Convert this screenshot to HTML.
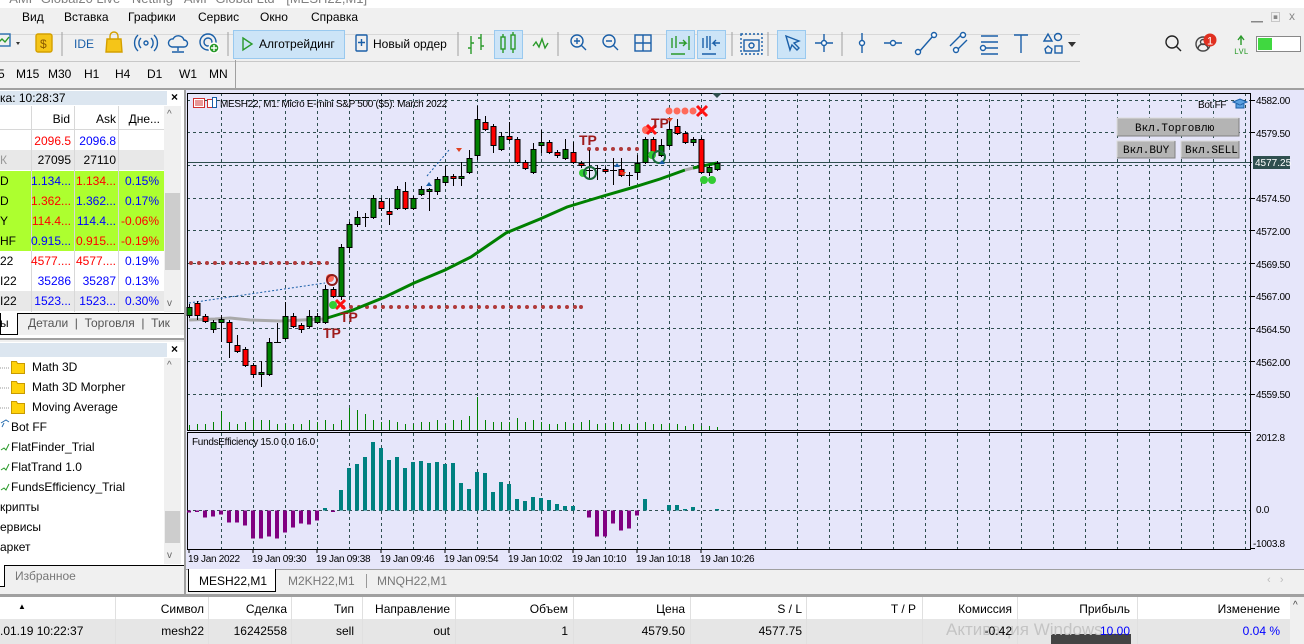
<!DOCTYPE html>
<html><head><meta charset="utf-8">
<style>
*{margin:0;padding:0;box-sizing:border-box}
body{width:1304px;height:644px;overflow:hidden;background:#f0f0f0;font-family:"Liberation Sans","Noto Sans CJK SC",sans-serif;font-size:12px;color:#000;position:relative}
.a{position:absolute;white-space:nowrap}
.sep{position:absolute;width:1px;background:#a0a0a0}
.mw div.r{position:absolute;left:0;width:164px;height:20px}
.t{position:absolute;white-space:nowrap;text-align:right}
</style></head><body>
<!-- title -->
<div class="a" style="left:0;top:0;width:1304px;height:8px;background:#fff;overflow:hidden"><div class="a" style="left:2px;top:-9px;color:#808080;font-size:13px">- AMP Global20 Live - Netting - AMP Global Ltd - [MESH22,M1]</div></div>
<!-- menu -->
<div class="a" style="left:22px;top:10px;font-size:12px">Вид</div>
<div class="a" style="left:64px;top:10px">Вставка</div>
<div class="a" style="left:128px;top:10px">Графики</div>
<div class="a" style="left:198px;top:10px">Сервис</div>
<div class="a" style="left:260px;top:10px">Окно</div>
<div class="a" style="left:311px;top:10px">Справка</div>
<div class="a" style="left:1251px;top:8px;color:#888;font-size:12px">▁</div>
<div class="a" style="left:1270px;top:9px;color:#888;font-size:11px">▣</div>
<div class="a" style="left:1289px;top:9px;color:#888;font-size:12px">x</div>
<div class="a" style="left:0;top:34px;width:1080px;height:1px;background:#d8d8d8"></div>
<div class="a" style="left:0;top:61px;width:1080px;height:1px;background:#c8c8c8"></div>
<!-- toolbar -->
<svg class="a" style="left:0;top:28px" width="1304" height="34">
<g fill="none" stroke-width="1.4">
<rect x="-4" y="6" width="14" height="12" stroke="#2a6fb0"/><path d="M-2 15l4-4 3 3 4-5" stroke="#2a9a2a"/>
<path d="M16 14l4 0-2 3z" fill="#333" stroke="none"/>
<rect x="36" y="6" width="16" height="18" rx="2" fill="#f5c518" stroke="#d4a000"/>
<text x="40" y="20" font-size="12" fill="#8a5a00" stroke="none" font-family="Liberation Sans">$</text>
<line x1="62" y1="4" x2="62" y2="28" stroke="#a0a0a0" stroke-width="1"/>
<text x="74" y="20" font-size="12" fill="#1a5fa8" stroke="none" font-family="Liberation Sans">IDE</text>
<path d="M107 11h14l1 13h-16z" fill="#f5c518" stroke="#d4a000"/><path d="M110 11v-3a4 4 0 0 1 8 0v3" stroke="#d4a000"/>
<circle cx="146" cy="15" r="2" stroke="#1a5fa8"/><path d="M141 10a7 7 0 0 0 0 10M151 10a7 7 0 0 1 0 10M138 7a11 11 0 0 0 0 16M154 7a11 11 0 0 1 0 16" stroke="#1a5fa8"/>
<path d="M172 19a4 4 0 0 1 1-8 6 6 0 0 1 11 1 3.5 3.5 0 0 1 0 7zM178 19v4M172 24h12" stroke="#1a5fa8"/>
<circle cx="208" cy="14" r="8" stroke="#1a5fa8"/><circle cx="208" cy="14" r="4" stroke="#1a5fa8"/><circle cx="214" cy="20" r="5" fill="#2a9a2a" stroke="#fff"/><path d="M214 17v6M211 20h6" stroke="#fff"/>
<line x1="228" y1="4" x2="228" y2="28" stroke="#a0a0a0" stroke-width="1"/>
<rect x="233.5" y="2.5" width="111" height="28" fill="#cce4f7" stroke="#99c9ef" stroke-width="1"/>
<path d="M243 10l9 6-9 6z" stroke="#2a9a2a"/>
<rect x="356" y="7" width="11" height="16" rx="1" stroke="#1a5fa8"/><path d="M361.5 11v7M358 14.5h7" stroke="#1a5fa8"/>
<line x1="458" y1="4" x2="458" y2="28" stroke="#a0a0a0" stroke-width="1"/>
<path d="M471 8v18M468 20h3M471 15h3M481 6v16M478 10h3M481 18h3" stroke="#2a9a2a"/>
<rect x="494.5" y="2.5" width="28" height="28" fill="#cce4f7" stroke="#99c9ef" stroke-width="1"/>
<rect x="501" y="9" width="4" height="12" stroke="#2a9a2a"/><rect x="511" y="7" width="4" height="14" stroke="#2a9a2a"/><path d="M503 6v3M503 21v4M513 4v3M513 21v4" stroke="#2a9a2a"/>
<path d="M533 18l3-4 3 5 3-8 3 9 3-5" stroke="#2a9a2a"/>
<line x1="558" y1="4" x2="558" y2="28" stroke="#a0a0a0" stroke-width="1"/>
<circle cx="577" cy="13" r="6" stroke="#1a5fa8"/><path d="M581 17l5 5M574 13h6M577 10v6" stroke="#1a5fa8"/>
<circle cx="609" cy="13" r="6" stroke="#1a5fa8"/><path d="M613 17l5 5M606 13h6" stroke="#1a5fa8"/>
<rect x="635" y="7" width="16" height="16" stroke="#1a5fa8"/><path d="M643 7v16M635 15h16" stroke="#1a5fa8"/>
<rect x="666.5" y="2.5" width="28" height="28" fill="#cce4f7" stroke="#99c9ef" stroke-width="1"/>
<rect x="697.5" y="2.5" width="28" height="28" fill="#cce4f7" stroke="#99c9ef" stroke-width="1"/>
<path d="M672 10v10M676 8v12M679 15h7l-3-3M683 18l3-3M689 8v14M671 26h14" stroke="#2a9a2a"/>
<path d="M703 10v10M707 8v12M720 15h-7l3-3M713 15l3 3M710 8v14M702 26h14" stroke="#1a5fa8"/>
<line x1="732" y1="4" x2="732" y2="28" stroke="#a0a0a0" stroke-width="1"/>
<rect x="741" y="6" width="21" height="20" stroke="#1a5fa8" stroke-dasharray="2,2"/><rect x="744" y="12" width="15" height="11" stroke="#1a5fa8"/><circle cx="751.5" cy="17.5" r="2.5" stroke="#1a5fa8"/>
<line x1="768" y1="4" x2="768" y2="28" stroke="#a0a0a0" stroke-width="1"/>
<rect x="777.5" y="2.5" width="28" height="28" fill="#cce4f7" stroke="#99c9ef" stroke-width="1"/>
<path d="M786 8l4 14 2-5 5 5 2-2-5-5 5-2z" stroke="#1a5fa8"/>
<path d="M824 6v18M815 15h18" stroke="#1a5fa8"/><circle cx="824" cy="15" r="2.5" fill="#fff" stroke="#1a5fa8"/>
<line x1="842" y1="4" x2="842" y2="28" stroke="#a0a0a0" stroke-width="1"/>
<path d="M862 5v20" stroke="#1a5fa8"/><circle cx="862" cy="15" r="2.5" fill="#fff" stroke="#1a5fa8"/>
<path d="M884 15h18" stroke="#1a5fa8"/><circle cx="893" cy="15" r="2.5" fill="#fff" stroke="#1a5fa8"/>
<path d="M919 24l14-16" stroke="#1a5fa8"/><circle cx="918" cy="24" r="2.5" fill="#fff" stroke="#1a5fa8"/><circle cx="934" cy="7" r="2.5" fill="#fff" stroke="#1a5fa8"/>
<path d="M950 18l12-12M955 24l12-12" stroke="#1a5fa8"/><circle cx="963" cy="7" r="2.5" fill="#fff" stroke="#1a5fa8"/><circle cx="956" cy="22" r="2.5" fill="#fff" stroke="#1a5fa8"/>
<path d="M981 8h17M981 14h17M986 20h12M981 26h17" stroke="#1a5fa8"/><circle cx="983" cy="20" r="2.5" fill="#fff" stroke="#1a5fa8"/>
<path d="M1014 7h14M1021 7v18" stroke="#1a5fa8"/>
<path d="M1044 13l4-7 4 7z" stroke="#1a5fa8"/><circle cx="1058" cy="9" r="3.5" stroke="#1a5fa8"/><path d="M1045 21l3-3 4 3-1 4h-5z" stroke="#1a5fa8"/><rect x="1055" y="18" width="7" height="7" stroke="#1a5fa8"/>
<path d="M1068 14h8l-4 5z" fill="#333" stroke="none"/>
<circle cx="1172" cy="14" r="6" stroke="#222"/><path d="M1176 18l5 5" stroke="#222"/>
<circle cx="1203" cy="16" r="7" stroke="#444"/><circle cx="1203" cy="14" r="2.5" stroke="#444"/><path d="M1198 21a5 5 0 0 1 10 0" stroke="#444"/>
<circle cx="1210" cy="12" r="6.5" fill="#e03020" stroke="none"/><text x="1207" y="16.5" font-size="11" fill="#fff" stroke="none" font-family="Liberation Sans">1</text>
<path d="M1241 17v-8M1238 12l3-4 3 4" stroke="#2a9a2a"/><text x="1234" y="26" font-size="8" fill="#2a9a2a" stroke="none" font-family="Liberation Mono">LVL</text>
<rect x="1256.5" y="8.5" width="44" height="15" fill="#fff" stroke="#888" stroke-width="1"/><rect x="1258" y="10" width="14" height="12" fill="#40d840" stroke="none"/>
</g>
<text x="259" y="20" font-size="12" font-family="Liberation Sans" fill="#000">Алготрейдинг</text>
<text x="373" y="20" font-size="12" font-family="Liberation Sans" fill="#000">Новый ордер</text>
</svg>
<!-- timeframes -->
<div class="a" style="left:-2px;top:67px">5</div>
<div class="a" style="left:16px;top:67px">M15</div>
<div class="a" style="left:48px;top:67px">M30</div>
<div class="a" style="left:84px;top:67px">H1</div>
<div class="a" style="left:115px;top:67px">H4</div>
<div class="a" style="left:147px;top:67px">D1</div>
<div class="a" style="left:179px;top:67px">W1</div>
<div class="a" style="left:209px;top:67px">MN</div>
<div class="sep" style="left:235px;top:60px;height:28px"></div>
<div class="a" style="left:0;top:88px;width:1304px;height:2px;background:#a0a0a0"></div>

<!-- market watch -->
<div class="a" style="left:0;top:90px;width:184px;height:250px;background:#fff"></div>
<div class="a" style="left:0;top:91px;width:167px;height:14px;background:#dce6f0"></div>
<div class="a" style="left:0;top:91px;font-size:12px">ка: 10:28:37</div>
<div class="a" style="left:171px;top:90px;font-weight:bold;font-size:12px">×</div>
<div class="a" style="left:0;top:150px;width:164px;height:20px;background:#e8e8e8"></div>
<div class="a" style="left:0;top:171px;width:164px;height:80px;background:#adff2f"></div>
<div class="a" style="left:0;top:291px;width:164px;height:20px;background:#e8e8e8"></div>
<svg class="a" style="left:0;top:106px" width="164" height="206"><g stroke="#d8d8d8"><line x1="31.5" y1="0" x2="31.5" y2="206"/><line x1="74.5" y1="0" x2="74.5" y2="206"/><line x1="118.5" y1="0" x2="118.5" y2="206"/><line x1="0" y1="23.5" x2="164" y2="23.5"/></g></svg>
<div class="t" style="left:30px;width:40px;top:112px">Bid</div>
<div class="t" style="left:74px;width:42px;top:112px">Ask</div>
<div class="t" style="left:118px;width:42px;top:112px">Дне...</div>
<div class="mw">
<div class="t" style="left:30px;width:41px;top:134px;color:#f00">2096.5</div><div class="t" style="left:74px;width:42px;top:134px;color:#00f">2096.8</div>
<div class="a" style="left:0;top:153px;color:#999">К</div><div class="t" style="left:30px;width:41px;top:153px">27095</div><div class="t" style="left:74px;width:42px;top:153px">27110</div>
<div class="a" style="left:0;top:174px">D</div><div class="t" style="left:30px;width:41px;top:174px;color:#00f">1.134...</div><div class="t" style="left:74px;width:42px;top:174px;color:#f00">1.134...</div><div class="t" style="left:118px;width:41px;top:174px;color:#00f">0.15%</div>
<div class="a" style="left:0;top:194px">D</div><div class="t" style="left:30px;width:41px;top:194px;color:#f00">1.362...</div><div class="t" style="left:74px;width:42px;top:194px;color:#00f">1.362...</div><div class="t" style="left:118px;width:41px;top:194px;color:#00f">0.17%</div>
<div class="a" style="left:0;top:214px">Y</div><div class="t" style="left:30px;width:41px;top:214px;color:#f00">114.4...</div><div class="t" style="left:74px;width:42px;top:214px;color:#00f">114.4...</div><div class="t" style="left:118px;width:41px;top:214px;color:#f00">-0.06%</div>
<div class="a" style="left:0;top:234px">HF</div><div class="t" style="left:30px;width:41px;top:234px;color:#00f">0.915...</div><div class="t" style="left:74px;width:42px;top:234px;color:#f00">0.915...</div><div class="t" style="left:118px;width:41px;top:234px;color:#f00">-0.19%</div>
<div class="a" style="left:0;top:254px">22</div><div class="t" style="left:30px;width:41px;top:254px;color:#f00">4577....</div><div class="t" style="left:74px;width:42px;top:254px;color:#f00">4577....</div><div class="t" style="left:118px;width:41px;top:254px;color:#00f">0.19%</div>
<div class="a" style="left:0;top:274px">I22</div><div class="t" style="left:30px;width:41px;top:274px;color:#00f">35286</div><div class="t" style="left:74px;width:42px;top:274px;color:#00f">35287</div><div class="t" style="left:118px;width:41px;top:274px;color:#00f">0.13%</div>
<div class="a" style="left:0;top:294px">I22</div><div class="t" style="left:30px;width:41px;top:294px;color:#00f">1523...</div><div class="t" style="left:74px;width:42px;top:294px;color:#00f">1523...</div><div class="t" style="left:118px;width:41px;top:294px;color:#00f">0.30%</div>
</div>
<div class="a" style="left:164px;top:106px;width:17px;height:206px;background:#f0f0f0"></div>
<div class="a" style="left:165px;top:193px;width:15px;height:77px;background:#cdcdcd"></div>
<div class="a" style="left:167px;top:109px;color:#666;font-size:10px">^</div>
<div class="a" style="left:167px;top:298px;color:#666;font-size:10px">v</div>
<div class="a" style="left:0;top:313px;width:184px;height:22px;background:#f0f0f0;border-top:1px solid #000"></div>
<div class="a" style="left:0;top:313px;width:18px;height:22px;background:#fff;border:1px solid #000;border-top:none"></div>
<div class="a" style="left:0;top:316px">ы</div>
<div class="a" style="left:28px;top:316px;color:#555">Детали &nbsp;| &nbsp;Торговля &nbsp;| &nbsp;Тик</div>
<div class="a" style="left:0;top:338px;width:184px;height:2px;background:#a0a0a0"></div>

<!-- navigator -->
<div class="a" style="left:0;top:342px;width:184px;height:224px;background:#fff"></div>
<div class="a" style="left:0;top:343px;width:167px;height:14px;background:#dce6f0"></div>
<div class="a" style="left:171px;top:342px;font-weight:bold">×</div>
<svg class="a" style="left:0;top:358px" width="30" height="140"><g fill="#ffd20a" stroke="#c89a00"><path d="M11.5 3.5h5l1 2h7v10h-13z"/><path d="M11.5 23.5h5l1 2h7v10h-13z"/><path d="M11.5 43.5h5l1 2h7v10h-13z"/></g><g stroke="#999" stroke-dasharray="1,1"><path d="M0 10h10M0 30h10M0 50h10"/></g>
<path d="M1 65l5-3 3 2M4 65l-2 4" stroke="#2a6fb0" fill="none"/><path d="M1 92l3-2 2 2 3-6M1 112l3-2 2 2 3-6M1 132l3-2 2 2 3-6" stroke="#2a9a2a" fill="none"/></svg>
<div class="a" style="left:32px;top:360px">Math 3D</div>
<div class="a" style="left:32px;top:380px">Math 3D Morpher</div>
<div class="a" style="left:32px;top:400px">Moving Average</div>
<div class="a" style="left:11px;top:420px">Bot FF</div>
<div class="a" style="left:11px;top:440px">FlatFinder_Trial</div>
<div class="a" style="left:11px;top:460px">FlatTrand 1.0</div>
<div class="a" style="left:11px;top:480px">FundsEfficiency_Trial</div>
<div class="a" style="left:0;top:500px">крипты</div>
<div class="a" style="left:0;top:520px">ервисы</div>
<div class="a" style="left:0;top:540px">аркет</div>
<div class="a" style="left:164px;top:358px;width:17px;height:206px;background:#f0f0f0"></div>
<div class="a" style="left:165px;top:511px;width:15px;height:32px;background:#cdcdcd"></div>
<div class="a" style="left:167px;top:360px;color:#666;font-size:10px">^</div>
<div class="a" style="left:167px;top:550px;color:#666;font-size:10px">v</div>
<div class="a" style="left:0;top:565px;width:184px;height:24px;background:#f0f0f0;border-top:1px solid #000"></div>
<div class="a" style="left:0;top:565px;width:5px;height:22px;background:#fff;border-right:1px solid #000;border-bottom:1px solid #000"></div>
<div class="a" style="left:15px;top:569px;color:#777">Избранное</div>
<div class="a" style="left:184px;top:90px;width:2px;height:504px;background:#a0a0a0"></div>

<!-- chart -->
<svg class="a" style="left:0;top:0" width="1304" height="600" font-family="Liberation Sans">
<rect x="186" y="90" width="1118" height="480" fill="#e6e6fa"/>
<g stroke="#2f4f4f" stroke-width="1" stroke-dasharray="3,3" fill="none">
<path d="M187 100.5H1250M187 132.5H1250M187 165.5H1250M187 198.5H1250M187 230.5H1250M187 263.5H1250M187 296.5H1250M187 328.5H1250M187 361.5H1250M187 394.5H1250M187 510.5H1250"/>
<path d="M221.5 93V430M253.5 93V430M285.5 93V430M317.5 93V430M349.5 93V430M381.5 93V430M413.5 93V430M445.5 93V430M477.5 93V430M509.5 93V430M541.5 93V430M573.5 93V430M605.5 93V430M637.5 93V430M669.5 93V430M701.5 93V430M733.5 93V430M765.5 93V430M797.5 93V430M829.5 93V430M861.5 93V430M893.5 93V430M925.5 93V430M957.5 93V430M989.5 93V430M1021.5 93V430M1053.5 93V430M1085.5 93V430M1117.5 93V430M1149.5 93V430M1181.5 93V430M1213.5 93V430M1245.5 93V430"/>
<path d="M221.5 433V549M253.5 433V549M285.5 433V549M317.5 433V549M349.5 433V549M381.5 433V549M413.5 433V549M445.5 433V549M477.5 433V549M509.5 433V549M541.5 433V549M573.5 433V549M605.5 433V549M637.5 433V549M669.5 433V549M701.5 433V549M733.5 433V549M765.5 433V549M797.5 433V549M829.5 433V549M861.5 433V549M893.5 433V549M925.5 433V549M957.5 433V549M989.5 433V549M1021.5 433V549M1053.5 433V549M1085.5 433V549M1117.5 433V549M1149.5 433V549M1181.5 433V549M1213.5 433V549M1245.5 433V549"/>
</g>
<line x1="187" y1="162.5" x2="1252" y2="162.5" stroke="#2f4f4f"/>
<rect x="187.5" y="93.5" width="1063" height="337" fill="none" stroke="#000"/>
<rect x="187.5" y="432.5" width="1063" height="117" fill="none" stroke="#000"/>
<path d="M712 93h10l-5 5z" fill="#2f4f4f"/>
<!-- volumes -->
<g stroke="#008000" stroke-width="1">
<path d="M189.5 430v-5M197.5 430v-6M205.5 430v-6M213.5 430v-8M221.5 430v-19M229.5 430v-8M237.5 430v-6M245.5 430v-8M253.5 430v-10M261.5 430v-10M269.5 430v-10M277.5 430v-6M285.5 430v-6M293.5 430v-6M301.5 430v-6M309.5 430v-10M317.5 430v-8M325.5 430v-10M333.5 430v-6M341.5 430v-10M349.5 430v-22M357.5 430v-20M365.5 430v-16M373.5 430v-10M381.5 430v-8M389.5 430v-10M397.5 430v-8M405.5 430v-6M413.5 430v-6M421.5 430v-8M429.5 430v-8M437.5 430v-10M445.5 430v-6M453.5 430v-10M461.5 430v-10M469.5 430v-14M477.5 430v-33M485.5 430v-10M493.5 430v-8M501.5 430v-8M509.5 430v-8M517.5 430v-12M525.5 430v-8M533.5 430v-10M541.5 430v-8M549.5 430v-6M557.5 430v-6M565.5 430v-8M573.5 430v-6M581.5 430v-8M589.5 430v-10M597.5 430v-6M605.5 430v-6M613.5 430v-8M621.5 430v-6M629.5 430v-6M637.5 430v-6M645.5 430v-8M653.5 430v-6M661.5 430v-6M669.5 430v-6M677.5 430v-6M685.5 430v-4M693.5 430v-6M701.5 430v-4M709.5 430v-4M717.5 430v-3"/>
</g>
<!-- dotted levels -->
<g fill="#b03a3a">
<circle cx="191" cy="263" r="2"/><circle cx="199" cy="263" r="2"/><circle cx="207" cy="263" r="2"/><circle cx="215" cy="263" r="2"/><circle cx="223" cy="263" r="2"/><circle cx="231" cy="263" r="2"/><circle cx="239" cy="263" r="2"/><circle cx="247" cy="263" r="2"/><circle cx="255" cy="263" r="2"/><circle cx="263" cy="263" r="2"/><circle cx="271" cy="263" r="2"/><circle cx="279" cy="263" r="2"/><circle cx="287" cy="263" r="2"/><circle cx="295" cy="263" r="2"/><circle cx="303" cy="263" r="2"/><circle cx="311" cy="263" r="2"/><circle cx="319" cy="263" r="2"/><circle cx="327" cy="263" r="2"/>
<circle cx="343" cy="307" r="2"/><circle cx="351" cy="307" r="2"/><circle cx="359" cy="307" r="2"/><circle cx="367" cy="307" r="2"/><circle cx="375" cy="307" r="2"/><circle cx="383" cy="307" r="2"/><circle cx="391" cy="307" r="2"/><circle cx="399" cy="307" r="2"/><circle cx="407" cy="307" r="2"/><circle cx="415" cy="307" r="2"/><circle cx="423" cy="307" r="2"/><circle cx="431" cy="307" r="2"/><circle cx="439" cy="307" r="2"/><circle cx="447" cy="307" r="2"/><circle cx="455" cy="307" r="2"/><circle cx="463" cy="307" r="2"/><circle cx="471" cy="307" r="2"/><circle cx="479" cy="307" r="2"/><circle cx="487" cy="307" r="2"/><circle cx="495" cy="307" r="2"/><circle cx="503" cy="307" r="2"/><circle cx="511" cy="307" r="2"/><circle cx="519" cy="307" r="2"/><circle cx="527" cy="307" r="2"/><circle cx="535" cy="307" r="2"/><circle cx="543" cy="307" r="2"/><circle cx="551" cy="307" r="2"/><circle cx="559" cy="307" r="2"/><circle cx="567" cy="307" r="2"/><circle cx="575" cy="307" r="2"/><circle cx="581" cy="307" r="2"/>
<circle cx="589" cy="149" r="2"/><circle cx="597" cy="149" r="2"/><circle cx="605" cy="149" r="2"/><circle cx="613" cy="149" r="2"/><circle cx="621" cy="149" r="2"/><circle cx="629" cy="149" r="2"/><circle cx="637" cy="149" r="2"/>
</g>
<g fill="#ff6a5a"><circle cx="669" cy="111" r="3.5"/><circle cx="677" cy="111" r="3.5"/><circle cx="685" cy="111" r="3.5"/><circle cx="693" cy="111" r="3.5"/><circle cx="646" cy="130" r="4"/><circle cx="330" cy="278" r="4"/></g>
<path d="M189 303L325 283M427 176L449 150" stroke="#1a5fa8" stroke-dasharray="2,2" fill="none"/>
<!-- MA -->
<path d="M189 320L215 319 230 318 250 320 280 321 324 319" stroke="#a9a9a9" stroke-width="3" fill="none"/>
<path d="M324 319L353 310 385 297 414 283 445 270 471 257 506 233 540 219 567 207 600 197 631 188 660 179 685 170" stroke="#008000" stroke-width="3" fill="none"/>
<path d="M685 170L693 168" stroke="#a9a9a9" stroke-width="3"/>
<path d="M693 168L717 163" stroke="#008000" stroke-width="3"/>
<!-- candles -->
<g stroke="#000" stroke-width="1">
<path d="M189.5 304v14M197.5 301v19M205.5 314v9M213.5 320v13M221.5 315v27M229.5 320v38M237.5 335v18M245.5 347v20M253.5 363v15M261.5 361v26M269.5 338v38M277.5 323v20M285.5 302v38M293.5 313v15M301.5 323v10M309.5 310v18M317.5 313v11M325.5 285v39M333.5 287v11M341.5 244v56M349.5 222v31M357.5 211v16M365.5 213v14M373.5 195v24M381.5 198v13M389.5 198v27M397.5 186v24M405.5 182v28M413.5 196v14M421.5 186v10M429.5 188v23M437.5 177v18M445.5 166v20M453.5 174v12M461.5 162v24M469.5 150v24M477.5 106v54M485.5 116v15M493.5 124v29M501.5 132v19M509.5 122v19M517.5 137v27M525.5 160v10M533.5 143v31M541.5 130v23M549.5 140v14M557.5 150v8M565.5 139v21M573.5 142v22M581.5 161v7M589.5 150v30M597.5 165v15M605.5 167v6M613.5 158v27M621.5 158v19M629.5 172v14M637.5 155v25M645.5 137v27M653.5 137v17M661.5 139v18M669.5 119v28M677.5 119v16M685.5 131v13M693.5 137v9M701.5 137v37M709.5 165v11M717.5 161v10"/>
</g>
<g stroke="#000" stroke-width="1" fill="#008000">
<rect x="187" y="307.5" width="5" height="8"/><rect x="211" y="322.5" width="5" height="7"/><rect x="219" y="319.5" width="5" height="3"/><rect x="259" y="372.5" width="5" height="2"/><rect x="267" y="342.5" width="5" height="32"/><rect x="283" y="316.5" width="5" height="22"/><rect x="307" y="316.5" width="5" height="10"/><rect x="315" y="316.5" width="5" height="6"/><rect x="323" y="289.5" width="5" height="33"/><rect x="339" y="247.5" width="5" height="49"/><rect x="347" y="224.5" width="5" height="23"/><rect x="355" y="217.5" width="5" height="7"/><rect x="371" y="198.5" width="5" height="19"/><rect x="395" y="189.5" width="5" height="19"/><rect x="411" y="198.5" width="5" height="10"/><rect x="419" y="189.5" width="5" height="5"/><rect x="427" y="189.5" width="5" height="2"/><rect x="435" y="179.5" width="5" height="12"/><rect x="443" y="176.5" width="5" height="6"/><rect x="459" y="176.5" width="5" height="2"/><rect x="467" y="158.5" width="5" height="14"/><rect x="475" y="119.5" width="5" height="36"/><rect x="499" y="136.5" width="5" height="13"/><rect x="531" y="149.5" width="5" height="23"/><rect x="539" y="142.5" width="5" height="3"/><rect x="563" y="149.5" width="5" height="9"/><rect x="635" y="163.5" width="5" height="9"/><rect x="643" y="139.5" width="5" height="23"/><rect x="659" y="145.5" width="5" height="10"/><rect x="667" y="129.5" width="5" height="16"/><rect x="691" y="139.5" width="5" height="3"/><rect x="707" y="167.5" width="5" height="5"/><rect x="715" y="163.5" width="5" height="6"/>
</g>
<g stroke="#000" stroke-width="1" fill="#ff0000">
<rect x="195" y="303.5" width="5" height="12"/><rect x="203" y="316.5" width="5" height="5"/><rect x="227" y="322.5" width="5" height="20"/><rect x="235" y="345.5" width="5" height="6"/><rect x="243" y="349.5" width="5" height="16"/><rect x="251" y="365.5" width="5" height="9"/><rect x="291" y="316.5" width="5" height="10"/><rect x="299" y="325.5" width="5" height="4"/><rect x="331" y="289.5" width="5" height="7"/><rect x="379" y="201.5" width="5" height="7"/><rect x="387" y="211.5" width="5" height="3"/><rect x="403" y="191.5" width="5" height="17"/><rect x="451" y="176.5" width="5" height="2"/><rect x="483" y="122.5" width="5" height="7"/><rect x="491" y="126.5" width="5" height="19"/><rect x="507" y="136.5" width="5" height="3"/><rect x="515" y="139.5" width="5" height="23"/><rect x="523" y="162.5" width="5" height="6"/><rect x="547" y="142.5" width="5" height="10"/><rect x="555" y="152.5" width="5" height="3"/><rect x="571" y="152.5" width="5" height="10"/><rect x="579" y="163.5" width="5" height="2"/><rect x="603" y="169.5" width="5" height="2"/><rect x="619" y="169.5" width="5" height="6"/><rect x="651" y="139.5" width="5" height="13"/><rect x="675" y="126.5" width="5" height="7"/><rect x="683" y="133.5" width="5" height="9"/><rect x="699" y="139.5" width="5" height="33"/>
</g>
<path d="M274 342.5h7M362 217.5h7M586 170.5h7M594 168.5h7M610 170.5h7M626 175.5h7" stroke="#000"/>
<!-- markers -->
<g stroke="#ff1010" stroke-width="3"><path d="M336 300l9 9M345 300l-9 9M647 125l9 9M656 125l-9 9M697 106l10 10M707 106l-10 10"/></g>
<g fill="#9e1b1b" font-size="14" font-weight="bold" font-family="Liberation Sans"><text x="323" y="338">TP</text><text x="340" y="322">TP</text><text x="579" y="145">TP</text><text x="651" y="128">TP</text></g>
<g fill="#33cc33"><circle cx="583" cy="173" r="4"/><circle cx="652" cy="155" r="4"/><circle cx="704" cy="180" r="4"/><circle cx="712" cy="180" r="4"/><circle cx="333" cy="305" r="4"/></g>
<circle cx="590" cy="173" r="6" fill="none" stroke="#1a6a3a" stroke-width="2"/><circle cx="659" cy="157" r="6" fill="none" stroke="#1a6a3a" stroke-width="2"/><circle cx="332" cy="280" r="5" fill="none" stroke="#8b1a1a" stroke-width="2"/>
<g fill="#1a5fa8"><path d="M614 167l3-4 3 4z"/><path d="M426 186l3-4 3 4z"/><path d="M659 164l3-4 3 4z"/></g>
<g fill="#e04020"><path d="M620 172l3 4 3-4z"/><path d="M456 148l3 4 3-4z"/><path d="M667 118l3 4 3-4z"/></g>
<!-- histogram -->
<g fill="#800080">
<rect x="187" y="510.5" width="4" height="2"/><rect x="195" y="510.5" width="4" height="1.5"/><rect x="203" y="510.5" width="4" height="7"/><rect x="211" y="510.5" width="4" height="6"/><rect x="219" y="510.5" width="4" height="4"/><rect x="227" y="510.5" width="4" height="12"/><rect x="235" y="510.5" width="4" height="12"/><rect x="243" y="510.5" width="4" height="15"/><rect x="251" y="510.5" width="4" height="28"/><rect x="259" y="510.5" width="4" height="28"/><rect x="267" y="510.5" width="4" height="26"/><rect x="275" y="510.5" width="4" height="28"/><rect x="283" y="510.5" width="4" height="22"/><rect x="291" y="510.5" width="4" height="17"/><rect x="299" y="510.5" width="4" height="13"/><rect x="307" y="510.5" width="4" height="14"/><rect x="315" y="510.5" width="4" height="10"/><rect x="331" y="510.5" width="4" height="1.5"/>
<rect x="587" y="510.5" width="4" height="7"/><rect x="595" y="510.5" width="4" height="26"/><rect x="603" y="510.5" width="4" height="26"/><rect x="611" y="510.5" width="4" height="13"/><rect x="619" y="510.5" width="4" height="20"/><rect x="627" y="510.5" width="4" height="18"/><rect x="635" y="510.5" width="4" height="5"/>
</g>
<g fill="#008080">
<rect x="323" y="508" width="4" height="2.5"/><rect x="339" y="490" width="4" height="20.5"/><rect x="347" y="468" width="4" height="42.5"/><rect x="355" y="464" width="4" height="46.5"/><rect x="363" y="457" width="4" height="53.5"/><rect x="371" y="442" width="4" height="68.5"/><rect x="379" y="448" width="4" height="62.5"/><rect x="387" y="460" width="4" height="50.5"/><rect x="395" y="457" width="4" height="53.5"/><rect x="403" y="468" width="4" height="42.5"/><rect x="411" y="462" width="4" height="48.5"/><rect x="419" y="461" width="4" height="49.5"/><rect x="427" y="463" width="4" height="47.5"/><rect x="435" y="462" width="4" height="48.5"/><rect x="443" y="464" width="4" height="46.5"/><rect x="451" y="463" width="4" height="47.5"/><rect x="459" y="483" width="4" height="27.5"/><rect x="467" y="489" width="4" height="21.5"/><rect x="475" y="472" width="4" height="38.5"/><rect x="483" y="473" width="4" height="37.5"/><rect x="491" y="492" width="4" height="18.5"/><rect x="499" y="482" width="4" height="28.5"/><rect x="507" y="484" width="4" height="26.5"/><rect x="515" y="499" width="4" height="11.5"/><rect x="523" y="501" width="4" height="9.5"/><rect x="531" y="497" width="4" height="13.5"/><rect x="539" y="498" width="4" height="12.5"/><rect x="547" y="500" width="4" height="10.5"/><rect x="555" y="504" width="4" height="6.5"/><rect x="563" y="506" width="4" height="4.5"/><rect x="571" y="506" width="4" height="4.5"/><rect x="643" y="499" width="4" height="11.5"/><rect x="667" y="505" width="4" height="5.5"/><rect x="675" y="505" width="4" height="5.5"/><rect x="683" y="509" width="4" height="1.5"/><rect x="691" y="507" width="4" height="3.5"/><rect x="715" y="509" width="4" height="1.5"/>
</g>
<!-- labels -->
<g font-size="10" fill="#000" letter-spacing="-0.3">
<text x="220" y="107">MESH22, M1:  Micro E-mini S&amp;P 500 ($5): March 2022</text>
<text x="192" y="445">FundsEfficiency 15.0 0.0 16.0</text>
<text x="1198" y="108">Bot FF</text>
<text x="1256" y="104">4582.00</text><text x="1256" y="137">4579.50</text><text x="1256" y="202">4574.50</text><text x="1256" y="235">4572.00</text><text x="1256" y="268">4569.50</text><text x="1256" y="300">4567.00</text><text x="1256" y="333">4564.50</text><text x="1256" y="366">4562.00</text><text x="1256" y="398">4559.50</text>
<text x="1256" y="441">2012.8</text><text x="1256" y="513">0.0</text><text x="1253" y="547">-1003.8</text>
<text x="188" y="562">19 Jan 2022</text><text x="252" y="562">19 Jan 09:30</text><text x="316" y="562">19 Jan 09:38</text><text x="380" y="562">19 Jan 09:46</text><text x="444" y="562">19 Jan 09:54</text><text x="508" y="562">19 Jan 10:02</text><text x="572" y="562">19 Jan 10:10</text><text x="636" y="562">19 Jan 10:18</text><text x="700" y="562">19 Jan 10:26</text>
</g>
<g stroke="#000"><path d="M1251 100.5h4M1251 132.5h4M1251 198.5h4M1251 230.5h4M1251 263.5h4M1251 296.5h4M1251 328.5h4M1251 361.5h4M1251 394.5h4M1251 548.5h4"/></g>
<path d="M189 549v4M253 549v4M317 549v4M381 549v4M445 549v4M509 549v4M573 549v4M637 549v4M701 549v4" stroke="#000"/>
<rect x="1253" y="156" width="37" height="13" fill="#2f4f4f"/>
<text x="1255" y="166" font-size="10" fill="#fff">4577.25</text>
<!-- chart icons -->
<rect x="193.5" y="98.5" width="11" height="9" fill="#fff" stroke="#d03030"/><path d="M195 101h8M195 103h8M195 105h8" stroke="#d03030"/>
<rect x="207.5" y="99.5" width="5" height="8" fill="#fff" stroke="#d03030"/><rect x="212.5" y="97.5" width="4" height="10" fill="#fff" stroke="#1a5fa8"/>
<path d="M1233 102l7-3 7 3-7 3zM1236 104v4h8v-4" fill="#5aa0e0" stroke="#1a5fa8"/>
<!-- buttons -->
<rect x="1117" y="118" width="122" height="18" fill="#b4b4b4" stroke="#dcdcdc"/><path d="M1117 136h122V118" stroke="#808080" fill="none"/>
<rect x="1117" y="141" width="58" height="17" fill="#b4b4b4" stroke="#dcdcdc"/><path d="M1117 158h58V141" stroke="#808080" fill="none"/>
<rect x="1181" y="141" width="58" height="17" fill="#b4b4b4" stroke="#dcdcdc"/><path d="M1181 158h58V141" stroke="#808080" fill="none"/>
<g font-family="Liberation Mono" font-size="11" fill="#000"><text x="1135" y="131">Вкл.Торговлю</text><text x="1123" y="153">Вкл.BUY</text><text x="1185" y="153">Вкл.SELL</text></g>
</svg>
<!-- chart tabs -->
<div class="a" style="left:186px;top:569px;width:1118px;height:25px;background:#f0f0f0;border-top:1px solid #a0a0a0"></div>
<div class="a" style="left:188px;top:569px;width:88px;height:23px;background:#fff;border:1px solid #000;border-top:none"></div>
<div class="a" style="left:199px;top:574px">MESH22,M1</div>
<div class="a" style="left:288px;top:574px;color:#777">M2KH22,M1</div>
<div class="sep" style="left:366px;top:574px;height:14px;background:#999"></div>
<div class="a" style="left:377px;top:574px;color:#777">MNQH22,M1</div>
<div class="a" style="left:1267px;top:574px;color:#bbb;font-size:11px">‹ &nbsp; ›</div>
<div class="a" style="left:0;top:594px;width:1304px;height:3px;background:#a0a0a0"></div>
<!-- trade table -->
<div class="a" style="left:0;top:597px;width:1290px;height:22px;background:#fff"></div>
<div class="a" style="left:0;top:619px;width:1290px;height:25px;background:#e6e6e6"></div>
<div class="a" style="left:1290px;top:597px;width:14px;height:47px;background:#f0f0f0"></div>
<div class="a" style="left:1293px;top:600px;font-size:10px;color:#444">^</div>
<div class="a" style="left:1051px;top:634px;width:80px;height:10px;background:#444"></div>
<svg class="a" style="left:0;top:597px" width="1290" height="47"><g stroke="#e0e0e0"><path d="M115.5 0v47M208.5 0v47M291.5 0v47M362.5 0v47M455.5 0v47M573.5 0v47M690.5 0v47M806.5 0v47M922.5 0v47M1017.5 0v47M1137.5 0v47"/></g></svg>
<div class="a" style="left:18px;top:602px;font-size:8px">▲</div>
<div class="t" style="right:1100px;top:602px">Символ</div>
<div class="t" style="right:1017px;top:602px">Сделка</div>
<div class="t" style="right:950px;top:602px">Тип</div>
<div class="t" style="right:854px;top:602px">Направление</div>
<div class="t" style="right:736px;top:602px">Объем</div>
<div class="t" style="right:619px;top:602px">Цена</div>
<div class="t" style="right:502px;top:602px">S / L</div>
<div class="t" style="right:388px;top:602px">T / P</div>
<div class="t" style="right:292px;top:602px">Комиссия</div>
<div class="t" style="right:174px;top:602px">Прибыль</div>
<div class="t" style="right:24px;top:602px">Изменение</div>
<div class="a" style="left:0;top:624px">.01.19 10:22:37</div>
<div class="t" style="right:1100px;top:624px">mesh22</div>
<div class="t" style="right:1017px;top:624px">16242558</div>
<div class="t" style="right:950px;top:624px">sell</div>
<div class="t" style="right:854px;top:624px">out</div>
<div class="t" style="right:736px;top:624px">1</div>
<div class="t" style="right:619px;top:624px">4579.50</div>
<div class="t" style="right:502px;top:624px">4577.75</div>
<div class="a" style="left:946px;top:620px;font-size:17px;color:#c4c4c4">Активация Windows</div>
<div class="t" style="right:292px;top:624px">-0.42</div>
<div class="t" style="right:174px;top:624px;color:#00f">10.00</div>
<div class="t" style="right:24px;top:624px;color:#00f">0.04 %</div>
</body></html>
